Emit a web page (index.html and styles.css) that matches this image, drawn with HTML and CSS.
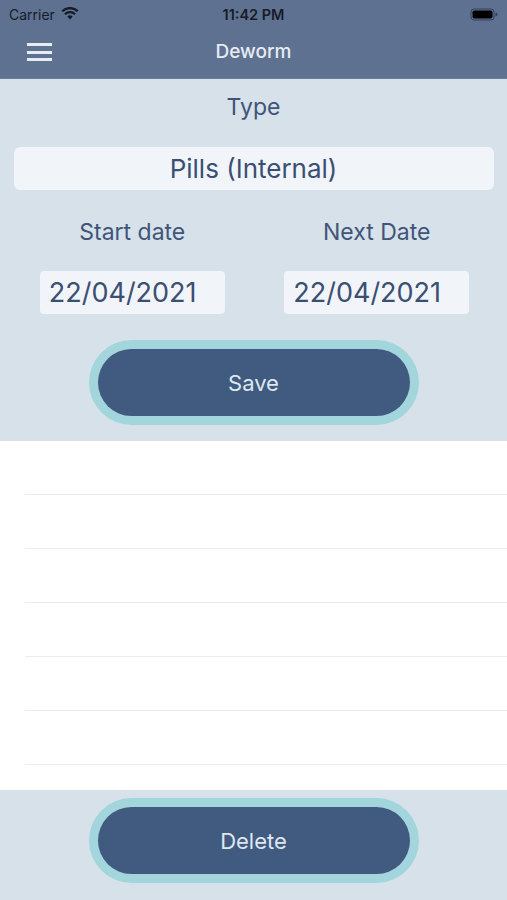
FILE: index.html
```html
<!DOCTYPE html>
<html>
<head>
<meta charset="utf-8">
<link rel="stylesheet" href="styles.css">
</head>
<body>
<div class="app">
  <header class="header">
    <div class="status">
      <div class="status-left">
        <span class="carrier">Carrier</span>
        <svg class="wifi" width="18" height="13" viewBox="0 0 18 13"><path d="M9 12.5 L6.3 9.6 A3.9 3.9 0 0 1 11.7 9.6 Z" fill="#151b26"/><path d="M3.9 7.2 A7.3 7.3 0 0 1 14.1 7.2" stroke="#151b26" stroke-width="2.2" fill="none"/><path d="M1.2 4.3 A11 11 0 0 1 16.8 4.3" stroke="#151b26" stroke-width="2.2" fill="none"/></svg>
      </div>
      <span class="time">11:42 PM</span>
      <div class="status-right">
        <svg class="battery" width="28" height="13" viewBox="0 0 28 13"><rect x="1" y="1" width="23" height="11" rx="3" fill="none" stroke="#34405a" stroke-width="1"/><rect x="2.5" y="2.5" width="20" height="8" rx="1.8" fill="#000"/><path d="M25.5 4.5 a2 2 0 0 1 0 4 z" fill="#34405a"/></svg>
      </div>
    </div>
    <div class="nav">
      <div class="menu"><span></span><span></span><span></span></div>
      <div class="title">Deworm</div>
    </div>
  </header>
  <section class="form">
    <div class="label">Type</div>
    <div class="type-box">Pills (Internal)</div>
    <div class="dates">
      <div class="date-col">
        <div class="label">Start date</div>
        <div class="date-box">22/04/2021</div>
      </div>
      <div class="date-col">
        <div class="label">Next Date</div>
        <div class="date-box">22/04/2021</div>
      </div>
    </div>
    <div class="btn-wrap save-wrap"><div class="btn">Save</div></div>
  </section>
  <section class="list">
    <div class="row"></div>
    <div class="row"></div>
    <div class="row"></div>
    <div class="row"></div>
    <div class="row"></div>
    <div class="row"></div>
  </section>
  <footer class="footer">
    <div class="btn-wrap"><div class="btn">Delete</div></div>
  </footer>
</div>
</body>
</html>
```
FILE: styles.css
```css
* { box-sizing: border-box; }
html, body { margin: 0; padding: 0; }
body { font-family: Inter, "Open Sans", "Liberation Sans", sans-serif; background: #fff; }
.app { width: 507px; height: 900px; display: flex; flex-direction: column; overflow: hidden; }
.header { background: #5e7190; height: 79px; border-bottom: 1px solid #6e8099; }
.status { height: 28px; display: flex; align-items: center; justify-content: space-between; padding: 0 9px 0 9px; position: relative; }
.status-left { display: flex; align-items: center; gap: 6px; width: 120px; }
.carrier { font-size: 14px; color: #161c28; }
.wifi { margin-top: -2px; }
.time { font-size: 14.5px; font-weight: 600; color: #161c28; }
.status-right { width: 120px; display: flex; justify-content: flex-end; }
.nav { height: 50px; display: flex; align-items: center; position: relative; }
.menu { display: flex; flex-direction: column; gap: 4.5px; margin-left: 27px; margin-top: -2px; }
.menu span { display: block; width: 25px; height: 3px; background: #e6ecf3; }
.title { position: absolute; left: 0; right: 0; text-align: center; font-size: 19px; font-weight: 500; color: #e6ecf3; top: 12px; }
.form { background: #d6e1ea; height: 362px; display: flex; flex-direction: column; align-items: center; padding-top: 12px; }
.label { font-size: 23px; color: #3f5478; line-height: 32px; }
.type-box { margin-top: 24px; width: 480px; height: 43px; background: #f1f4f8; border-radius: 6px; display: flex; align-items: center; justify-content: center; font-size: 26px; color: #3a4f72; }
.dates { display: flex; width: 100%; margin-top: 26px; }
.date-col { flex: 1; display: flex; flex-direction: column; align-items: center; }
.date-col:first-child { padding-left: 10px; }
.date-col:last-child { padding-right: 8px; }
.date-box { margin-top: 23px; width: 185px; height: 43px; background: #f1f4f8; border-radius: 4px; font-size: 27px; color: #3a4f72; padding-left: 9px; display: flex; align-items: center; }
.btn-wrap { width: 330px; height: 85px; border-radius: 43px; background: #a3d5dd; padding: 9px; }
.save-wrap { margin-top: 26px; }
.btn { width: 100%; height: 100%; border-radius: 34px; background: #405b7f; color: #dfe7f1; font-size: 22px; display: flex; align-items: center; justify-content: center; }
.list { flex: 1; background: #fff; padding-top: 0; }
.row { height: 54px; margin-left: 25px; border-bottom: 1px solid #ececec; }
.footer { background: #d6e1ea; height: 110px; display: flex; justify-content: center; }
.footer .btn-wrap { margin-top: 8px; }
```
